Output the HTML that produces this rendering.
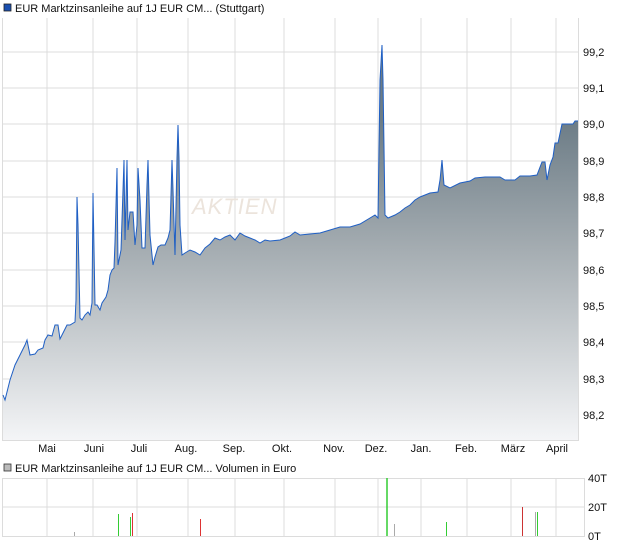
<!DOCTYPE html>
<html><head><meta charset="utf-8"><style>
body{margin:0;background:#fff;font-family:"Liberation Sans",sans-serif;}
svg text{font-family:"Liberation Sans",sans-serif;font-size:11px;fill:#111;}
</style></head><body>
<svg width="620" height="546" xmlns="http://www.w3.org/2000/svg">
<defs><linearGradient id="g" gradientUnits="userSpaceOnUse" x1="0" y1="120" x2="0" y2="440">
<stop offset="0" stop-color="#6c7c86"/><stop offset="0.4" stop-color="#a4acb1"/><stop offset="0.75" stop-color="#d2d6d9"/><stop offset="1" stop-color="#f4f5f7"/></linearGradient></defs>
<rect x="4" y="4" width="7" height="7" fill="#1a4fb0" stroke="#222" stroke-width="0.8"/>
<text x="15" y="12">EUR Marktzinsanleihe auf 1J EUR CM... (Stuttgart)</text>
<g stroke="#dcdcdc" stroke-width="1" fill="none">
<path d="M47 18V440M93 18V440M137 18V440M188 18V440M235 18V440M284 18V440M335 18V440M378 18V440M421 18V440M467 18V440M511 18V440M556 18V440"/>
<path d="M3 52H578M3 88H578M3 124H578M3 161H578M3 197H578M3 233H578M3 270H578M3 306H578M3 342H578M3 379H578M3 415H578"/>
<path d="M2.5 18V440.5H578.5V18"/>
</g>
<text x="192" y="214" style="font-size:22px;font-style:italic;fill:#ece4dc;letter-spacing:1px">AKTIEN</text>
<path d="M3 395L5 400L10 380L15 365L20 355L25 345L27 340L30 355L35 354L38 350L43 348L45 340L48 335L52 336L55 325L58 325L60 339L63 333L67 325L70 325L75 322L76 300L77 197L78 225L80 318L82 320L85 315L88 312L90 315L92 303L93 193L95 305L97 305L100 310L102 303L106 297L108 290L110 275L112 270L114 268L115 242L117 168L118 265L121 250L124 160L125 240L127 160L128 230L130 212L133 212L135 245L137 225L138 168L140 200L142 248L145 248L147 185L148 160L150 235L153 265L155 257L158 247L161 245L165 245L168 238L170 230L172 160L173 190L175 255L177 158L178 125L179 158L180 225L182 255L185 253L190 250L195 252L200 255L205 248L210 244L215 238L220 240L225 237L230 235L235 240L240 233L245 236L250 238L255 240L260 243L265 240L270 241L280 240L285 238L290 236L295 232L300 235L310 234L320 233L330 230L340 227L350 227L360 224L370 218L375 215L378 218L380 80L382 45L383 80L385 215L388 218L395 215L400 212L405 208L410 205L415 200L420 197L430 193L438 192L440 180L442 160L444 185L450 188L460 183L470 181L475 178L485 177L500 177L505 180L515 180L520 176L530 176L537 175L542 162L545 162L547 180L550 165L553 157L555 143L558 143L562 124L573 124L575 121L578 121L578 440L3 440Z" fill="url(#g)"/>
<path d="M3 395L5 400L10 380L15 365L20 355L25 345L27 340L30 355L35 354L38 350L43 348L45 340L48 335L52 336L55 325L58 325L60 339L63 333L67 325L70 325L75 322L76 300L77 197L78 225L80 318L82 320L85 315L88 312L90 315L92 303L93 193L95 305L97 305L100 310L102 303L106 297L108 290L110 275L112 270L114 268L115 242L117 168L118 265L121 250L124 160L125 240L127 160L128 230L130 212L133 212L135 245L137 225L138 168L140 200L142 248L145 248L147 185L148 160L150 235L153 265L155 257L158 247L161 245L165 245L168 238L170 230L172 160L173 190L175 255L177 158L178 125L179 158L180 225L182 255L185 253L190 250L195 252L200 255L205 248L210 244L215 238L220 240L225 237L230 235L235 240L240 233L245 236L250 238L255 240L260 243L265 240L270 241L280 240L285 238L290 236L295 232L300 235L310 234L320 233L330 230L340 227L350 227L360 224L370 218L375 215L378 218L380 80L382 45L383 80L385 215L388 218L395 215L400 212L405 208L410 205L415 200L420 197L430 193L438 192L440 180L442 160L444 185L450 188L460 183L470 181L475 178L485 177L500 177L505 180L515 180L520 176L530 176L537 175L542 162L545 162L547 180L550 165L553 157L555 143L558 143L562 124L573 124L575 121L578 121" fill="none" stroke="#1f5fc4" stroke-width="1"/>
<g>
<text x="583" y="56">99,2</text><text x="583" y="92">99,1</text><text x="583" y="128">99,0</text><text x="583" y="165">98,9</text><text x="583" y="201">98,8</text><text x="583" y="237">98,7</text><text x="583" y="274">98,6</text><text x="583" y="310">98,5</text><text x="583" y="346">98,4</text><text x="583" y="383">98,3</text><text x="583" y="419">98,2</text>
</g>
<g text-anchor="middle">
<text x="47" y="452">Mai</text><text x="94" y="452">Juni</text><text x="139" y="452">Juli</text><text x="186" y="452">Aug.</text><text x="234" y="452">Sep.</text><text x="282" y="452">Okt.</text><text x="334" y="452">Nov.</text><text x="376" y="452">Dez.</text><text x="421" y="452">Jan.</text><text x="466" y="452">Feb.</text><text x="513" y="452">März</text><text x="557" y="452">April</text>
</g>
<rect x="4" y="464" width="7" height="7" fill="#bbb" stroke="#333" stroke-width="0.8"/>
<text x="15" y="472">EUR Marktzinsanleihe auf 1J EUR CM... Volumen in Euro</text>
<g stroke="#dcdcdc" stroke-width="1" fill="none">
<path d="M47 478V536M93 478V536M137 478V536M188 478V536M235 478V536M284 478V536M335 478V536M378 478V536M421 478V536M467 478V536M511 478V536M556 478V536"/>
<path d="M3 507H584"/>
<path d="M2.5 478V536.5H584.5V478M2.5 478.5H584.5"/>
</g>
<g stroke-width="1" fill="none">
<path d="M74.5 532V536" stroke="#aaa"/>
<path d="M118.5 514V536M130.5 517V536" stroke="#33cc33"/>
<path d="M132.5 513V536M200.5 519V536" stroke="#dd3333"/>
<path d="M387 478V536" stroke="#33cc33" stroke-width="1.5"/>
<path d="M394.5 524V536" stroke="#aaa"/>
<path d="M446.5 522V536" stroke="#33cc33"/>
<path d="M522.5 507V536" stroke="#cc3333"/>
<path d="M535.5 512V536" stroke="#aaa"/>
<path d="M537.5 512V536" stroke="#33cc33"/>
</g>
<text x="588" y="482">40T</text><text x="588" y="511">20T</text><text x="588" y="540">0T</text>
</svg>
</body></html>
